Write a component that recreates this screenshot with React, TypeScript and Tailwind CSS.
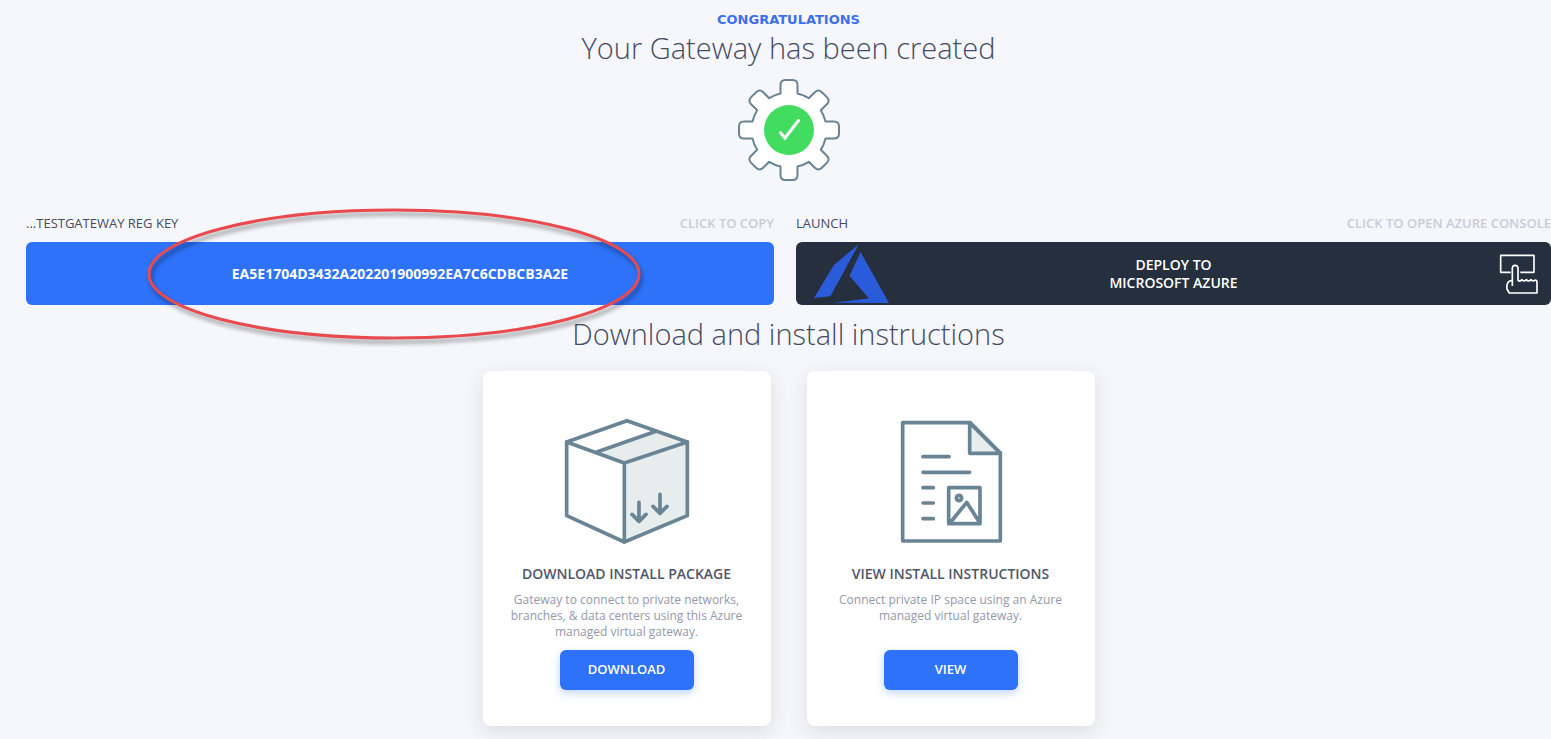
import { useState } from 'react'
import type { ReactNode } from 'react'

const REG_KEY = 'EA5E1704D3432A202201900992EA7C6CDBCB3A2E'

// One tooth of the gear, pointing up, plus the arc that leads to the next one
function gearPath() {
  const point = (x: number, y: number, angle: number) => {
    const px = x * Math.cos(angle) - y * Math.sin(angle)
    const py = x * Math.sin(angle) + y * Math.cos(angle)
    return `${px.toFixed(2)} ${py.toFixed(2)}`
  }
  let d = ''
  for (let i = 0; i < 8; i++) {
    const a = (i * Math.PI) / 4
    d += `${i === 0 ? 'M' : 'A 37.5 37.5 0 0 1 '}${point(-8.5, -36.5, a)} `
    d += `L ${point(-8.5, -45, a)} Q ${point(-8.5, -50, a)} ${point(-3.5, -50, a)} `
    d += `L ${point(3.5, -50, a)} Q ${point(8.5, -50, a)} ${point(8.5, -45, a)} `
    d += `L ${point(8.5, -36.5, a)} `
  }
  return d + 'A 37.5 37.5 0 0 1 -8.5 -36.5 Z'
}

function GearIcon() {
  return (
    <svg viewBox="-52 -52 104 104" className="w-[104px] h-[104px]" aria-hidden="true">
      <path d={gearPath()} fill="#FFFFFF" stroke="#698494" strokeWidth="2" strokeLinejoin="round" />
      <circle r="25" fill="#41DC60" />
      <path d="M-8.5 2.7 L-4 8 L9.5 -9.5" fill="none" stroke="#FFFFFF" strokeWidth="3" strokeLinecap="round" />
    </svg>
  )
}

function AzureIcon() {
  return (
    <svg viewBox="0 0 224 176" className="w-[75px] h-[59px]" fill="#2A5BDB" aria-hidden="true">
      <path d="M134 0 L60 62 L0 161 L49 156 Z" />
      <path d="M139 24 L106 95 L164 163 L56 175 L224 176 Z" />
    </svg>
  )
}

function TapIcon() {
  return (
    <svg viewBox="57 42 120 120" className="w-10 h-10" fill="none" stroke="#FFFFFF" strokeWidth="5" strokeLinejoin="round" aria-hidden="true">
      <path d="M92 97 H62 V46 H162 V97 H121" />
      <path d="M97 138 V84 Q98 76 105 76 Q113 76 114 84 V121 Q120 126 126 119 Q132 127 139 119 Q146 127 153 119 Q159 126 165 120 Q171 120 171 127 V159 H88 L81 147 Q79 134 85 126 Q89 121 97 122" />
    </svg>
  )
}

function BoxIcon() {
  return (
    <svg viewBox="252 159 378 381" className="w-[126px] h-[127px]" fill="none" stroke="#698494" strokeWidth="11" strokeLinecap="round" strokeLinejoin="round" aria-hidden="true">
      <path d="M348 262 L528 199 L622 231 V452 L433 531 V294 Z" fill="#E7ECED" stroke="none" />
      <path d="M441 167 L622 231 V452 L433 531 L260 452 V231 Z" />
      <path d="M260 231 L433 294 L622 231 M433 294 V531 M348 262 L528 199" />
      <path d="M477 412 V469 M456 448 L477 469 L498 448 M540 388 V445 M519 424 L540 445 L561 424" />
    </svg>
  )
}

function DocumentIcon() {
  return (
    <svg viewBox="264 159 378 381" className="w-[126px] h-[127px]" fill="none" stroke="#698494" strokeWidth="11" strokeLinecap="round" strokeLinejoin="round" aria-hidden="true">
      <path d="M308 173 H510 L601 264 V528 H308 Z" />
      <path d="M509 173 V265 H601 Z" fill="#E7ECED" />
      <path d="M369 275 H447 M369 322 H509 M369 368 H400 M369 414 H400 M369 461 H400" />
      <path d="M446 368 H540 V476 H446 Z M450 474 L500 412 L540 474" />
      <circle cx="477" cy="399" r="8" />
    </svg>
  )
}

type InstallCardProps = {
  icon: ReactNode
  title: string
  text: string
  action: string
}

function InstallCard({ icon, title, text, action }: InstallCardProps) {
  return (
    <article className="flex flex-col items-center w-72 pt-[47px] pb-9 px-6 bg-white rounded-lg shadow-[0_6px_20px_rgba(40,45,60,0.12)] text-center">
      {icon}
      <h3 className="mt-[19px] text-[14px] leading-5 font-semibold text-[#505668] whitespace-nowrap">{title}</h3>
      <p className="mt-2 h-12 text-[12px] leading-4 text-[#9498AA]">{text}</p>
      <button className="mt-2.5 w-[134px] h-10 rounded-md bg-[#2F72FA] text-[13px] font-semibold text-white shadow-[0_3px_8px_rgba(47,114,250,0.3)] hover:bg-[#2563EB] cursor-pointer">
        {action}
      </button>
    </article>
  )
}

export default function App() {
  const [copied, setCopied] = useState(false)

  const handleCopy = () => {
    navigator.clipboard.writeText(REG_KEY)
    setCopied(true)
  }

  return (
    <main className="min-h-screen overflow-hidden bg-[#F6F7FC] pt-[11px] pb-[13px] pl-[26px] font-['Open_Sans',sans-serif]">
      {/* Header */}
      <header className="flex flex-col items-center text-center">
        <p className="text-[13px] leading-[18px] font-bold text-[#3D6FEA] font-['DejaVu_Sans',sans-serif]">CONGRATULATIONS</p>
        <h1 className="mb-[11px] text-[29px] leading-[38px] font-light text-[#454B63]">Your Gateway has been created</h1>
        <GearIcon />
      </header>

      {/* Registration key and launch */}
      <div className="mt-8 grid grid-cols-[748fr_755fr] gap-[22px]">
        <section className="relative">
          <div className="flex justify-between mb-2.5 text-[13px] leading-[18px]">
            <span className="text-[#454B5E] font-medium">...TESTGATEWAY REG KEY</span>
            <span className="font-semibold text-[#C9CCD8]">{copied ? 'COPIED' : 'CLICK TO COPY'}</span>
          </div>
          <button
            onClick={handleCopy}
            className="w-full h-[63px] rounded-md bg-[#2F72FA] text-[14px] font-bold text-white cursor-pointer"
          >
            {REG_KEY}
          </button>
          <svg
            viewBox="0 0 494 130"
            className="absolute -top-[5px] left-[121px] w-[494px] h-[130px] overflow-visible pointer-events-none drop-shadow-[2px_4px_2px_rgba(0,0,0,0.4)]"
            aria-hidden="true"
          >
            <ellipse cx="247" cy="65" rx="245" ry="64" fill="none" stroke="#E84A4E" strokeWidth="3" />
          </svg>
        </section>

        <section>
          <div className="flex justify-between mb-2.5 text-[13px] leading-[18px]">
            <span className="text-[#454B5E] font-medium">LAUNCH</span>
            <span className="font-semibold text-[#C9CCD8]">CLICK TO OPEN AZURE CONSOLE</span>
          </div>
          <button className="grid grid-cols-[1fr_auto_1fr] items-center w-full h-[63px] px-3 rounded-md bg-[#252F3E] text-[14px] leading-[18px] font-semibold text-white cursor-pointer">
            <span className="pl-1.5">
              <AzureIcon />
            </span>
            <span>
              DEPLOY TO
              <br />
              MICROSOFT AZURE
            </span>
            <span className="justify-self-end">
              <TapIcon />
            </span>
          </button>
        </section>
      </div>

      {/* Install cards */}
      <h2 className="mt-[9px] text-center text-[29px] leading-10 font-light text-[#454B63]">Download and install instructions</h2>
      <div className="mt-[17px] flex flex-wrap justify-center gap-9">
        <InstallCard
          icon={<BoxIcon />}
          title="DOWNLOAD INSTALL PACKAGE"
          text="Gateway to connect to private networks, branches, & data centers using this Azure managed virtual gateway."
          action="DOWNLOAD"
        />
        <InstallCard
          icon={<DocumentIcon />}
          title="VIEW INSTALL INSTRUCTIONS"
          text="Connect private IP space using an Azure managed virtual gateway."
          action="VIEW"
        />
      </div>
    </main>
  )
}
